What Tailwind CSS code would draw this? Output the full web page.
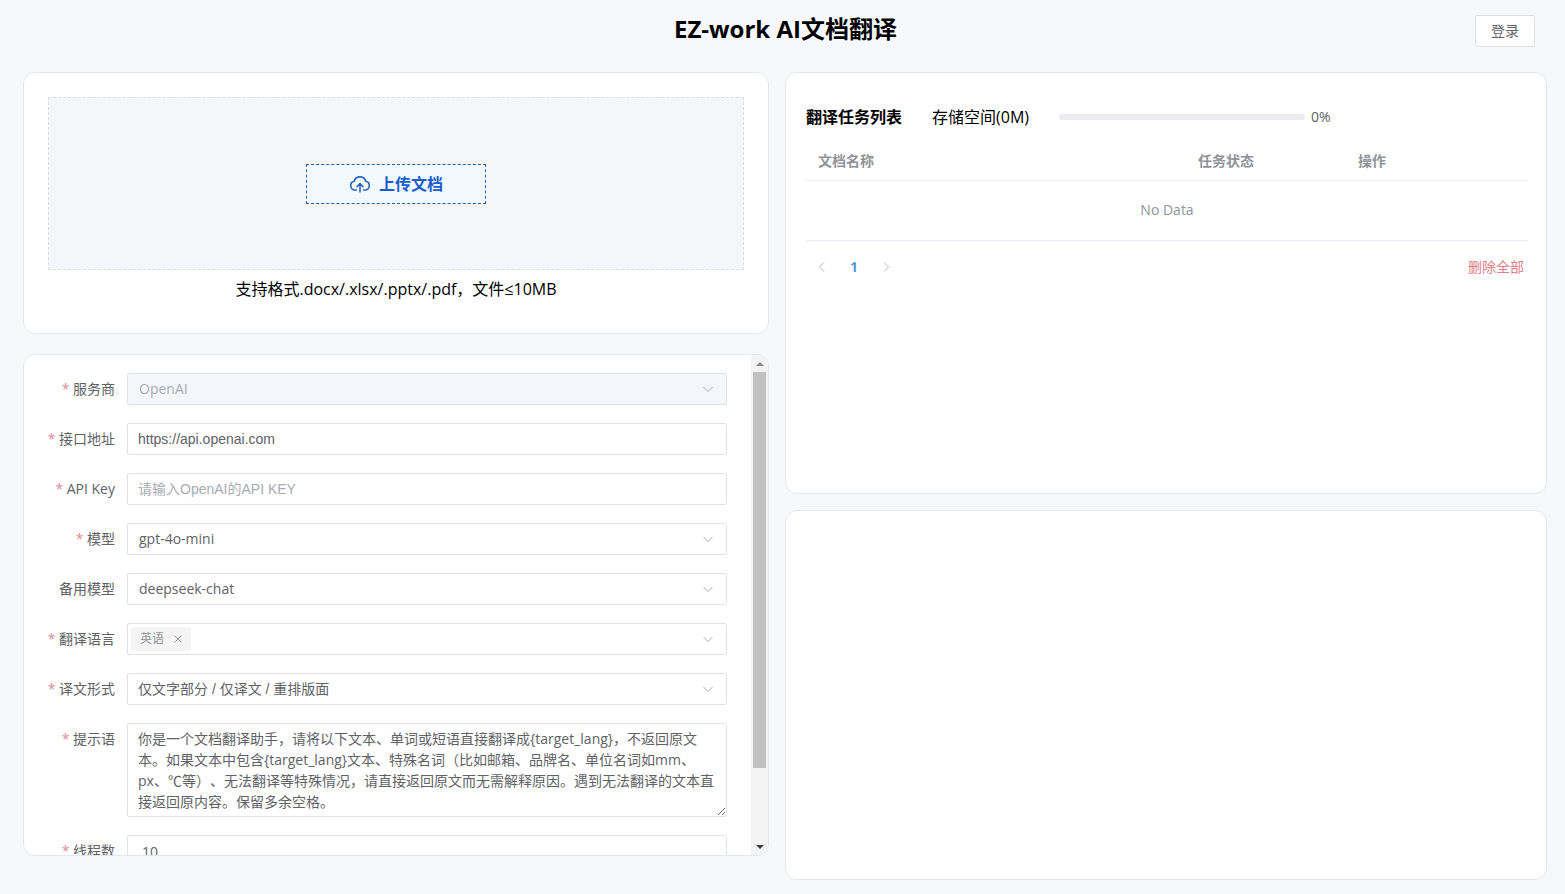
<!DOCTYPE html>
<html lang="zh-CN">
<head>
  <meta charset="UTF-8">
  <meta name="viewport" content="width=device-width, initial-scale=1.0">
  <title>EZ-work AI文档翻译</title>
  <script src="https://cdn.jsdelivr.net/npm/@tailwindcss/browser@4"></script>
</head>
<body class="h-screen min-h-[720px] flex flex-col bg-[#f7f8fb] text-black font-['Open_Sans','Noto_Sans_CJK_SC',sans-serif] [text-spacing-trim:space-all]">

  <!-- Header -->
  <header class="grid grid-cols-[1fr_auto_1fr] items-center h-[62px] pl-9 pr-[30px]">
    <h1 class="col-start-2 text-2xl font-bold -mt-1">EZ-work AI文档翻译</h1>
    <button type="button" class="justify-self-end w-15 h-8 rounded-xs border border-[#dcdfe6] bg-white text-sm text-[#606266]">登录</button>
  </header>

  <main class="flex-1 min-h-0 grid grid-cols-[746fr_762fr] gap-4 pt-2.5 pl-[23px] pr-[18px]">

    <!-- Left column -->
    <div class="flex flex-col gap-5 min-h-0 pb-[38px]">

      <!-- Upload -->
      <section class="rounded-xl border border-[#e4e7ed] bg-white px-6 pt-6 pb-8">
        <div class="flex items-center justify-center h-[173px] border border-dashed border-[#dcdfe6] bg-[#f4f6fa]">
          <button type="button" class="flex items-center justify-center gap-2 w-[180px] h-10 border border-dashed border-[#2b5cae] bg-[#f2f9ff] text-base font-bold text-[#1a5ccc]">
            <svg class="w-[22px] h-[22px]" viewBox="0 0 22 22" fill="none" stroke="#2f66bd" stroke-width="1.6" stroke-linecap="round" stroke-linejoin="round">
              <path d="M7.5 17H6a4.4 4.4 0 0 1-.8-8.7 6 6 0 0 1 11.6 0A4.4 4.4 0 0 1 16 17h-1.5"/>
              <path d="M11 19v-8M8 13.6l3-3 3 3"/>
            </svg>
            上传文档
          </button>
        </div>
        <p class="mt-[7px] text-center text-base leading-6">支持格式.docx/.xlsx/.pptx/.pdf，文件≤10MB</p>
      </section>

      <!-- Settings -->
      <section class="flex flex-1 min-h-0 overflow-hidden rounded-xl border border-[#e4e7ed] bg-white">
        <form id="settings" class="flex-1 min-w-0 flex flex-col gap-[18px] overflow-y-auto [scrollbar-width:none] pl-5 pr-6 py-[18px] text-sm text-[#606266]">

          <div class="flex gap-3">
            <label for="provider" class="w-[71px] shrink-0 text-right leading-8 whitespace-nowrap"><span class="text-[#e08a94]">*</span> 服务商</label>
            <div class="relative flex-1">
              <select id="provider" disabled class="block w-full h-8 appearance-none rounded-xs border border-[#dfe2e9] bg-[#f5f6fb] px-[11px] text-[#a8abb2] opacity-100">
                <option>OpenAI</option>
              </select>
              <svg class="absolute right-3 top-[9px] w-3.5 h-3.5 pointer-events-none" viewBox="0 0 14 14" fill="none" stroke="#a8abb2"><path d="M2.5 5l4.5 4.5L11.5 5"/></svg>
            </div>
          </div>

          <div class="flex gap-3">
            <label for="apiUrl" class="w-[71px] shrink-0 text-right leading-8 whitespace-nowrap"><span class="text-[#e08a94]">*</span> 接口地址</label>
            <input id="apiUrl" type="text" value="https://api.openai.com" class="flex-1 min-w-0 h-8 rounded-xs border border-[#dfe2e9] px-2.5 font-['Liberation_Sans','Noto_Sans_CJK_SC',sans-serif]">
          </div>

          <div class="flex gap-3">
            <label for="apiKey" class="w-[71px] shrink-0 text-right leading-8 whitespace-nowrap"><span class="text-[#e08a94]">*</span> API Key</label>
            <input id="apiKey" type="text" placeholder="请输入OpenAI的API KEY" class="flex-1 min-w-0 h-8 rounded-xs border border-[#dfe2e9] px-2.5 placeholder:text-[#a8abb2] font-['Liberation_Sans','Noto_Sans_CJK_SC',sans-serif]">
          </div>

          <div class="flex gap-3">
            <label for="model" class="w-[71px] shrink-0 text-right leading-8 whitespace-nowrap"><span class="text-[#e08a94]">*</span> 模型</label>
            <div class="relative flex-1">
              <select id="model" class="block w-full h-8 appearance-none rounded-xs border border-[#dfe2e9] bg-white px-[11px]">
                <option>gpt-4o-mini</option>
              </select>
              <svg class="absolute right-3 top-[9px] w-3.5 h-3.5 pointer-events-none" viewBox="0 0 14 14" fill="none" stroke="#a8abb2"><path d="M2.5 5l4.5 4.5L11.5 5"/></svg>
            </div>
          </div>

          <div class="flex gap-3">
            <label for="backup" class="w-[71px] shrink-0 text-right leading-8 whitespace-nowrap">备用模型</label>
            <div class="relative flex-1">
              <select id="backup" class="block w-full h-8 appearance-none rounded-xs border border-[#dfe2e9] bg-white px-[11px]">
                <option>deepseek-chat</option>
              </select>
              <svg class="absolute right-3 top-[9px] w-3.5 h-3.5 pointer-events-none" viewBox="0 0 14 14" fill="none" stroke="#a8abb2"><path d="M2.5 5l4.5 4.5L11.5 5"/></svg>
            </div>
          </div>

          <div class="flex gap-3">
            <label for="langs" class="w-[71px] shrink-0 text-right leading-8 whitespace-nowrap"><span class="text-[#e08a94]">*</span> 翻译语言</label>
            <div class="flex flex-1 items-center h-8 rounded-xs border border-[#dfe2e9] pl-[3px] pr-[11px]">
              <span class="flex items-center gap-2 h-6 rounded-xs bg-[#f4f4f5] pl-[9px] pr-[7px] text-xs text-[#909399]">
                英语
                <button type="button" aria-label="移除英语">
                  <svg class="w-3 h-3" viewBox="0 0 12 12" fill="none" stroke="#909399"><path d="M2.5 2.5l7 7M9.5 2.5l-7 7"/></svg>
                </button>
              </span>
              <input id="langs" type="text" class="flex-1 min-w-0 px-2 outline-none">
              <svg class="w-3.5 h-3.5" viewBox="0 0 14 14" fill="none" stroke="#a8abb2"><path d="M2.5 5l4.5 4.5L11.5 5"/></svg>
            </div>
          </div>

          <div class="flex gap-3">
            <label for="format" class="w-[71px] shrink-0 text-right leading-8 whitespace-nowrap"><span class="text-[#e08a94]">*</span> 译文形式</label>
            <div class="relative flex-1">
              <select id="format" class="block w-full h-8 appearance-none rounded-xs border border-[#dfe2e9] bg-white px-2.5 font-['Liberation_Sans','Noto_Sans_CJK_SC',sans-serif]">
                <option>仅文字部分 / 仅译文 / 重排版面</option>
              </select>
              <svg class="absolute right-3 top-[9px] w-3.5 h-3.5 pointer-events-none" viewBox="0 0 14 14" fill="none" stroke="#a8abb2"><path d="M2.5 5l4.5 4.5L11.5 5"/></svg>
            </div>
          </div>

          <div class="flex gap-3">
            <label for="prompt" class="w-[71px] shrink-0 text-right leading-8 whitespace-nowrap"><span class="text-[#e08a94]">*</span> 提示语</label>
            <textarea id="prompt" rows="4" class="block flex-1 min-w-0 resize-y overflow-hidden rounded-xs border border-[#dfe2e9] px-2.5 py-1 leading-[21px]">你是一个文档翻译助手，请将以下文本、单词或短语直接翻译成{target_lang}，不返回原文本。如果文本中包含{target_lang}文本、特殊名词（比如邮箱、品牌名、单位名词如mm、px、℃等）、无法翻译等特殊情况，请直接返回原文而无需解释原因。遇到无法翻译的文本直接返回原内容。保留多余空格。</textarea>
          </div>

          <div class="flex gap-3">
            <label for="threads" class="w-[71px] shrink-0 text-right leading-8 whitespace-nowrap"><span class="text-[#e08a94]">*</span> 线程数</label>
            <input id="threads" type="text" value="10" class="flex-1 min-w-0 h-8 rounded-xs border border-[#dfe2e9] px-3.5">
          </div>
        </form>

        <!-- Scrollbar -->
        <div class="flex flex-col w-[17px] bg-[#f3f3f3]">
          <button type="button" aria-label="向上" class="flex items-center justify-center h-[17px]" onclick="document.getElementById('settings').scrollBy(0, -50)">
            <svg class="w-2 h-1" viewBox="0 0 8 4" fill="#8b8b8b"><path d="M0 4l4-4 4 4z"/></svg>
          </button>
          <div class="flex-1 px-0.5">
            <div class="h-[85%] bg-[#c1c1c1]"></div>
          </div>
          <button type="button" aria-label="向下" class="flex items-center justify-center h-[17px]" onclick="document.getElementById('settings').scrollBy(0, 50)">
            <svg class="w-2 h-1" viewBox="0 0 8 4" fill="#404040"><path d="M0 0l4 4 4-4z"/></svg>
          </button>
        </div>
      </section>
    </div>

    <!-- Right column -->
    <div class="grid grid-rows-[422fr_370fr] gap-4 min-h-0 pb-3.5">

      <!-- Task list -->
      <section class="rounded-xl border border-[#e4e7ed] bg-white pt-8 pl-5 pr-[18px]">
        <div class="flex items-center h-6">
          <h2 class="text-base font-bold">翻译任务列表</h2>
          <span class="ml-[30px] text-base">存储空间(0M)</span>
          <div class="ml-[30px] w-[246px] h-1.5 rounded-full bg-[#ebebf0]"></div>
          <span class="ml-1.5 text-sm text-[#606266]">0%</span>
        </div>

        <table class="mt-[13px] w-full table-fixed text-sm text-[#909399]">
          <thead>
            <tr class="h-[38px] border-b border-[#ebeef5] text-left">
              <th class="w-[380px] px-3 font-bold">文档名称</th>
              <th class="w-[160px] px-3 font-bold">任务状态</th>
              <th class="px-3 font-bold">操作</th>
            </tr>
          </thead>
          <tbody>
            <tr class="h-15 border-b border-[#ebeef5]">
              <td colspan="3" class="text-center">No Data</td>
            </tr>
          </tbody>
        </table>

        <div class="flex items-center justify-between mt-2.5 pr-1 text-sm">
          <nav class="flex items-center">
            <button type="button" aria-label="上一页" class="flex items-center justify-center w-8 h-8">
              <svg class="w-3 h-3" viewBox="0 0 12 12" fill="none" stroke="#b4b7bd"><path d="M8 1.5L3.5 6 8 10.5"/></svg>
            </button>
            <button type="button" class="w-8 h-8 font-bold text-[#4f9be0]">1</button>
            <button type="button" aria-label="下一页" class="flex items-center justify-center w-8 h-8">
              <svg class="w-3 h-3" viewBox="0 0 12 12" fill="none" stroke="#b4b7bd"><path d="M4 1.5L8.5 6 4 10.5"/></svg>
            </button>
          </nav>
          <button type="button" class="text-[#e27c86]">删除全部</button>
        </div>
      </section>

      <section class="rounded-xl border border-[#e4e7ed] bg-white"></section>
    </div>
  </main>

</body>
</html>
